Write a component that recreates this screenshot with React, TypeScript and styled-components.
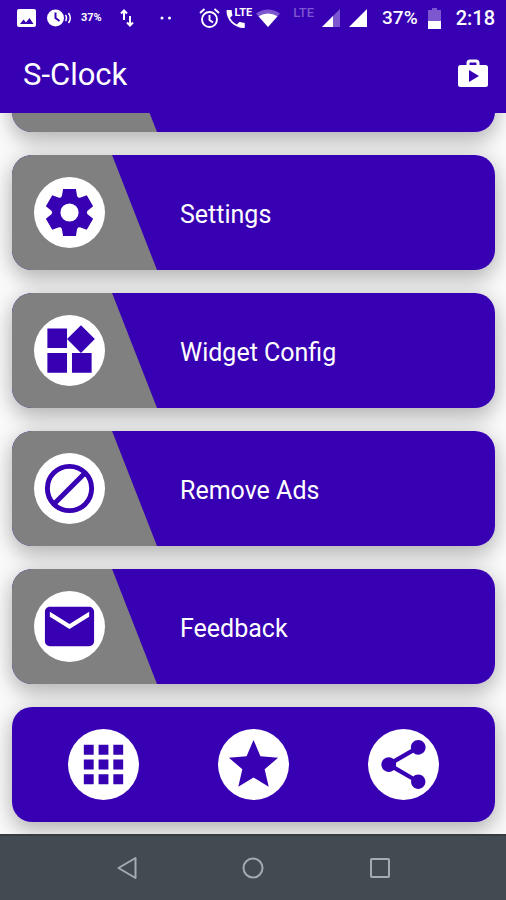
import React from "react";
import styled, { createGlobalStyle } from "styled-components";

const PURPLE = "#3700b3";
const GREY = "#808080";

const GlobalStyle = createGlobalStyle`
  * { box-sizing: border-box; }
  body {
    margin: 0;
    background: #fafafa;
    font-family: Roboto, "Liberation Sans", sans-serif;
  }
  button { font: inherit; border: 0; padding: 0; cursor: pointer; }
  svg { display: block; }
`;

const Screen = styled.div`
  display: flex;
  flex-direction: column;
  height: 100vh;
  overflow: hidden;
`;

const StatusBar = styled.div`
  display: flex;
  flex: none;
  justify-content: space-between;
  height: 36px;
  padding: 0 11px 0 17px;
  background: ${PURPLE};
  color: #fff;
`;

const StatusGroup = styled.div`
  display: flex;
  align-items: center;
`;

const StatusItem = styled.span<{ $before?: number }>`
  position: relative;
  flex: none;
  margin-left: ${(p) => p.$before ?? 0}px;
`;

const StatusText = styled(StatusItem)<{ $size: number }>`
  font-size: ${(p) => p.$size}px;
  font-weight: 500;
  line-height: 20px;
`;

const SmallText = styled(StatusItem)`
  font-size: 11px;
  font-weight: 700;
  line-height: 12px;
`;

const DimText = styled(StatusItem)`
  align-self: flex-start;
  padding-top: 7px;
  font-size: 13px;
  font-weight: 500;
  line-height: 12px;
  color: #7d57cf;
`;

const CallBadge = styled.span`
  position: absolute;
  top: -2px;
  right: 0;
  font-size: 11px;
  font-weight: 700;
  line-height: 12px;
`;

const AppBar = styled.header`
  display: flex;
  flex: none;
  align-items: center;
  justify-content: space-between;
  height: 77px;
  padding: 0 18px 0 23px;
  background: ${PURPLE};
  color: #fff;
`;

const Title = styled.h1`
  margin: 0;
  font-size: 31px;
  font-weight: 400;
  line-height: 40px;
`;

const BarButton = styled.button`
  background: none;
  color: #fff;
`;

const List = styled.main`
  display: flex;
  flex: 1;
  flex-direction: column;
  justify-content: flex-end;
  gap: 23px;
  min-height: 0;
  padding: 0 11px 12px 12px;
  overflow: hidden;
  isolation: isolate;
`;

const Surface = styled.div`
  position: relative;
  display: flex;
  flex: none;
  align-items: center;
  width: 100%;
  height: 115px;
  border-radius: 20px;
  background: ${PURPLE};
  color: #fff;

  &::before {
    content: "";
    position: absolute;
    inset: 0;
    z-index: -1;
    border-radius: 20px;
    box-shadow: 0 10px 20px rgba(0, 0, 0, 0.2), 0 0 24px rgba(0, 0, 0, 0.14);
  }
`;

const Card = styled(Surface)`
  text-align: left;
`;

const SlantPanel = styled.span`
  display: flex;
  align-items: center;
  width: 145px;
  height: 100%;
  padding-left: 22px;
  border-radius: 20px 0 0 20px;
  background: ${GREY};
  clip-path: polygon(0 0, 69% 0, 100% 100%, 0 100%);
`;

const Disc = styled.span`
  display: flex;
  align-items: center;
  justify-content: center;
  width: 71px;
  height: 71px;
  border-radius: 50%;
  background: #fff;
  color: ${PURPLE};
`;

const CardLabel = styled.span`
  padding: 4px 0 0 23px;
  font-size: 25px;
  line-height: 32px;
`;

const ActionBar = styled(Surface)`
  justify-content: space-between;
  padding: 0 56px;
`;

const ActionButton = styled.button`
  border-radius: 50%;
  background: none;
`;

const NavBar = styled.nav`
  display: grid;
  flex: none;
  grid-template-columns: repeat(3, 1fr);
  align-items: center;
  height: 66px;
  padding: 0 12.5%;
  border-top: 2px solid #373c41;
  background: #434b52;
`;

const NavButton = styled.button`
  justify-self: center;
  background: none;
  color: #a5abb0;
`;

function Icon({ children, size = 59 }: { children: React.ReactNode; size?: number }) {
  return (
    <svg width={size} height={size} viewBox="0 0 24 24" fill="currentColor" aria-hidden="true">
      {children}
    </svg>
  );
}

const items = [
  {
    label: "Settings",
    icon: (
      <>
        <circle cx="12" cy="12" r="6.600" />
        {[0, 60, 120, 180, 240, 300].map((angle) => (
          <path key={angle} d="M9.400 2.400h5.200l.5 2.900.8 1.200-3.900 2-3.900-2 .8-1.200z" transform={`rotate(${angle} 12 12)`} />
        ))}
        <circle cx="12" cy="12" r="3.700" fill="#fff" />
      </>
    ),
  },
  {
    label: "Widget Config",
    icon: (
      <path d="M13 13v8h8v-8h-8zM3 21h8v-8H3v8zM3 3v8h8V3H3zm13.660-1.310L11 7.340 16.660 13l5.660-5.660-5.660-5.650z" />
    ),
  },
  {
    label: "Remove Ads",
    icon: (
      <g fill="none" stroke="currentColor" strokeWidth="2">
        <circle cx="12" cy="12" r="9" />
        <path d="M5.800 18.200 18.200 5.800" />
      </g>
    ),
  },
  {
    label: "Feedback",
    icon: (
      <path d="M20 4H4c-1.100 0-1.990.9-1.990 2L2 18c0 1.100.9 2 2 2h16c1.100 0 2-.9 2-2V6c0-1.100-.9-2-2-2zm0 4l-8 5-8-5V6l8 5 8-5v2z" />
    ),
  },
];

const actions = [
  {
    label: "More apps",
    icon: (
      <path d="M4 8h4V4H4v4zm6 12h4v-4h-4v4zm-6 0h4v-4H4v4zm0-6h4v-4H4v4zm6 0h4v-4h-4v4zm6-10v4h4V4h-4zm-6 4h4V4h-4v4zm6 6h4v-4h-4v4zm0 6h4v-4h-4v4z" />
    ),
  },
  {
    label: "Rate",
    icon: (
      <path d="M12 17.270 18.180 21l-1.640-7.030L22 9.240l-7.190-.610L12 2 9.190 8.630 2 9.240l5.460 4.730L5.820 21z" />
    ),
  },
  {
    label: "Share",
    icon: (
      <path d="M18 16.080c-.760 0-1.440.3-1.960.770L8.910 12.700c.050-.230.090-.460.090-.7s-.040-.470-.090-.7l7.050-4.110c.540.5 1.250.810 2.040.810 1.660 0 3-1.340 3-3s-1.340-3-3-3-3 1.340-3 3c0 .240.040.470.090.7L8.040 9.810C7.500 9.310 6.790 9 6 9c-1.660 0-3 1.340-3 3s1.340 3 3 3c.790 0 1.500-.310 2.040-.810l7.120 4.160c-.050.210-.080.430-.080.650 0 1.610 1.310 2.920 2.920 2.920s2.920-1.310 2.920-2.920-1.310-2.920-2.920-2.920z" />
    ),
  },
];

function StatusIcons() {
  return (
    <StatusBar>
      <StatusGroup>
        <StatusItem>
          <svg width="19" height="19" viewBox="0 0 19 19" aria-hidden="true">
            <rect width="19" height="18" rx="2" fill="#fff" />
            <path d="M3 15 6.500 10.500l2.500 3L12.500 9l4 6z" fill={PURPLE} />
          </svg>
        </StatusItem>
        <StatusItem $before={11}>
          <svg width="25" height="18" viewBox="0 0 25 18" fill="none" aria-hidden="true">
            <circle cx="8.500" cy="9" r="8.500" fill="#fff" />
            <path d="M8.500 3.500V9l4 3" stroke={PURPLE} strokeWidth="2" />
            <path d="M18.500 6q2 3 0 6M21.500 4q3.500 5 0 10" stroke="#fff" strokeWidth="1.500" />
          </svg>
        </StatusItem>
        <SmallText $before={9}>37%</SmallText>
        <StatusItem $before={18}>
          <svg width="14" height="18" viewBox="0 0 14 18" fill="none" stroke="#fff" strokeWidth="2" aria-hidden="true">
            <path d="M4 11V1.500M1 4.500l3-3 3 3M10 7v9.500M7 13.500l3 3 3-3" />
          </svg>
        </StatusItem>
        <StatusItem $before={26}>
          <svg width="12" height="4" viewBox="0 0 12 4" fill="#fff" aria-hidden="true">
            <circle cx="2" cy="2" r="1.500" />
            <circle cx="9.500" cy="2" r="1.500" />
          </svg>
        </StatusItem>
      </StatusGroup>
      <StatusGroup>
        <StatusItem>
          <svg width="21" height="20" viewBox="0 0 21 20" fill="none" stroke="#fff" strokeWidth="1.900" aria-hidden="true">
            <circle cx="10.500" cy="11.500" r="7.500" />
            <path d="M10.500 7v5l3.500 2.500M1 5l4.500-4M20 5l-4.500-4" />
          </svg>
        </StatusItem>
        <StatusItem $before={6}>
          <svg width="26" height="19" viewBox="0 0 26 19" fill="#fff" aria-hidden="true">
            <path d="M4 8.800c1.500 3 3.900 5.300 6.800 6.800l2.300-2.300c.3-.3.700-.4 1-.2 1.200.4 2.400.6 3.700.6.600 0 1 .4 1 1v3.300c0 .6-.4 1-1 1C8.400 19 .500 11.100.500 2c0-.6.400-1 1-1h3.300c.6 0 1 .4 1 1 0 1.300.2 2.500.6 3.700.1.300 0 .7-.2 1z" />
          </svg>
          <CallBadge>LTE</CallBadge>
        </StatusItem>
        <StatusItem $before={4}>
          <svg width="24" height="18" viewBox="0 0 24 18" aria-hidden="true">
            <path d="M0 4.500Q12-3.500 24 4.500L12 18z" fill="#7d57cf" />
            <path d="M2.500 7.300Q12 1.500 21.500 7.300L12 18z" fill="#fff" />
          </svg>
        </StatusItem>
        <DimText $before={13}>LTE</DimText>
        <StatusItem $before={8}>
          <svg width="18" height="18" viewBox="0 0 18 18" aria-hidden="true">
            <path d="M0 18 18 0v18z" fill="#7d57cf" />
            <path d="M0 18 11 7v11z" fill="#fff" />
          </svg>
        </StatusItem>
        <StatusItem $before={9}>
          <svg width="18" height="18" viewBox="0 0 18 18" fill="#fff" aria-hidden="true">
            <path d="M0 18 18 0v18z" />
          </svg>
        </StatusItem>
        <StatusText $before={15} $size={19}>37%</StatusText>
        <StatusItem $before={10}>
          <svg width="13" height="21" viewBox="0 0 13 21" aria-hidden="true">
            <path d="M4 0h5v2h4v12H0V2h4z" fill="#7d57cf" />
            <path d="M0 13h13v8H0z" fill="#fff" />
          </svg>
        </StatusItem>
        <StatusText $before={15} $size={20}>2:18</StatusText>
      </StatusGroup>
    </StatusBar>
  );
}

export default function App() {
  return (
    <Screen>
      <GlobalStyle />
      <StatusIcons />
      <AppBar>
        <Title>S-Clock</Title>
        <BarButton aria-label="Store">
          <svg width="30" height="32" viewBox="0 0 30 32" aria-hidden="true">
            <path d="M10 8V4a2 2 0 0 1 2-2h6a2 2 0 0 1 2 2V8" fill="none" stroke="#fff" strokeWidth="3" />
            <rect y="6" width="30" height="22" rx="2.500" fill="#fff" />
            <path d="M11 11v12l10-6z" fill={PURPLE} />
          </svg>
        </BarButton>
      </AppBar>
      <List>
        <Card aria-hidden="true">
          <SlantPanel />
        </Card>
        {items.map((item) => (
          <Card as="button" key={item.label}>
            <SlantPanel>
              <Disc>
                <Icon>{item.icon}</Icon>
              </Disc>
            </SlantPanel>
            <CardLabel>{item.label}</CardLabel>
          </Card>
        ))}
        <ActionBar>
          {actions.map((action) => (
            <ActionButton key={action.label} aria-label={action.label}>
              <Disc>
                <Icon>{action.icon}</Icon>
              </Disc>
            </ActionButton>
          ))}
        </ActionBar>
      </List>
      <NavBar>
        <NavButton aria-label="Back">
          <svg width="22" height="24" viewBox="0 0 22 24" fill="none" stroke="currentColor" strokeWidth="2" strokeLinejoin="round" aria-hidden="true">
            <path d="M19.500 2v20L2.500 12z" />
          </svg>
        </NavButton>
        <NavButton aria-label="Home">
          <svg width="24" height="24" viewBox="0 0 24 24" fill="none" stroke="currentColor" strokeWidth="2" aria-hidden="true">
            <circle cx="12" cy="12" r="9.500" />
          </svg>
        </NavButton>
        <NavButton aria-label="Recent apps">
          <svg width="24" height="24" viewBox="0 0 24 24" fill="none" stroke="currentColor" strokeWidth="2" aria-hidden="true">
            <rect x="3" y="3" width="18" height="18" rx="1" />
          </svg>
        </NavButton>
      </NavBar>
    </Screen>
  );
}
